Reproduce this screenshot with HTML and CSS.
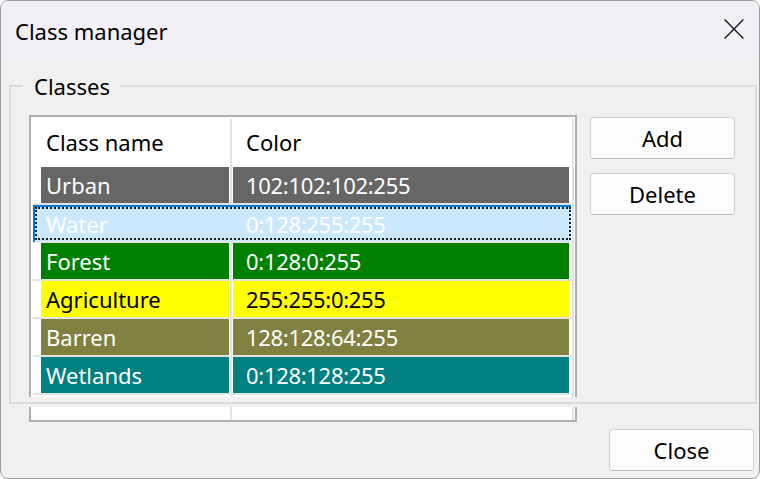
FILE: index.html
```html
<!DOCTYPE html>
<html lang="en">
<head>
<meta charset="utf-8">
<title>Class manager</title>
<link rel="stylesheet" href="styles.css">
</head>
<body>
<div class="window">
  <header class="titlebar">
    <span class="title">Class manager</span>
    <button class="close-x" aria-label="Close">
      <svg width="20" height="20" viewBox="0 0 20 20"><path d="M0.6 0.6 L19.4 19.4 M19.4 0.6 L0.6 19.4" stroke="#1a1a1a" stroke-width="1.4" fill="none"/></svg>
    </button>
  </header>
  <main class="client">
    <fieldset class="group">
      <legend>Classes</legend>
      <div class="group-body">
        <div class="list">
          <div class="list-head">
            <div class="hcell c1">Class name</div>
            <div class="hcell c2">Color</div>
          </div>
          <div class="row urban"><div class="cell c1">Urban</div><div class="cell c2">102:102:102:255</div></div>
          <div class="row water sel"><div class="cell c1">Water</div><div class="cell c2">0:128:255:255</div></div>
          <div class="row forest"><div class="cell c1">Forest</div><div class="cell c2">0:128:0:255</div></div>
          <div class="row agri"><div class="cell c1">Agriculture</div><div class="cell c2">255:255:0:255</div></div>
          <div class="row barren"><div class="cell c1">Barren</div><div class="cell c2">128:128:64:255</div></div>
          <div class="row wet"><div class="cell c1">Wetlands</div><div class="cell c2">0:128:128:255</div></div>
        </div>
        <div class="side-buttons">
          <button class="btn">Add</button>
          <button class="btn">Delete</button>
        </div>
      </div>
    </fieldset>
    <div class="footer">
      <button class="btn">Close</button>
    </div>
  </main>
</div>
</body>
</html>
```

FILE: styles.css
```css
* { box-sizing: border-box; }
html, body { margin: 0; padding: 0; }
body {
  background: #ffffff;
  font-family: "Noto Sans", "Open Sans", sans-serif;
  font-size: 22px;
  color: #000;
}
.window {
  width: 760px;
  height: 479px;
  border: 1px solid #9c9c9c;
  border-radius: 8px;
  overflow: hidden;
  background: #f0f0f0;
  display: flex;
  flex-direction: column;
}
.titlebar {
  height: 59px;
  flex: none;
  background: #f3eff7;
  display: flex;
  align-items: flex-start;
  padding-left: 14px;
}
.title {
  flex: 1;
  font-size: 22px;
  line-height: 30px;
  margin-top: 15px;
}
.close-x {
  width: 20px;
  height: 20px;
  margin: 18px 15px 0 0;
  padding: 0;
  border: 0;
  background: none;
  display: block;
}
.close-x svg { display: block; }
.client {
  flex: 1;
  display: flex;
  flex-direction: column;
}
.group {
  position: relative;
  margin: 12px 0 0 8px;
  width: 748px;
  min-width: 0;
  border: 2px solid #dcdcdc;
  padding: 15px 20px 0 18px;
}
.group legend {
  font-size: 22px;
  line-height: 28px;
  padding: 0 10px 0 11px;
  margin-left: -6px;
}
.group::after {
  content: "";
  position: absolute;
  left: 0;
  right: 0;
  bottom: -5px;
  height: 10px;
  background: linear-gradient(#f0f0f0 5px, #dcdcdc 5px, #dcdcdc 7px, #f0f0f0 7px);
  z-index: 1;
}
.group-body {
  display: flex;
  align-items: flex-start;
  gap: 13px;
  height: 287px;
}
.list {
  flex: none;
  width: 548px;
  height: 307px;
  border: 2px solid #aeaeb3;
  background:
    linear-gradient(to right, transparent 199px, #e3e3e3 199px, #e3e3e3 201px, transparent 201px, transparent 541px, #e3e3e3 541px, #e3e3e3 543px, transparent 543px) 0 2px / 100% 100% no-repeat,
    #ffffff;
}
.list-head {
  display: flex;
  height: 50px;
  padding-top: 0;
  align-items: center;
  line-height: 30px;
}
.hcell { white-space: nowrap; }
.hcell.c1 { width: 200px; padding-left: 15px; }
.hcell.c2 { padding-left: 15px; }
.row {
  display: flex;
  height: 38px;
  width: 539px;
  margin-left: 2px;
  padding-left: 8px;
  border-bottom: 2px solid #e3e3e3;
  color: #ffffff;
}
.cell {
  height: 36px;
  line-height: 36px;
  white-space: nowrap;
}
.cell.c1 { width: 188px; padding-left: 5px; }
.cell.c2 { width: 336px; margin-left: 4px; padding-left: 13px; letter-spacing: -0.3px; }
.urban .cell { background: #666666; }
.forest .cell { background: #008000; }
.agri { color: #000; }
.agri .cell { background: #ffff00; }
.barren .cell { background: #808040; }
.wet .cell { background: #008080; }
.row.sel {
  position: relative;
  width: 538px;
  padding-left: 6px;
  background: #cce8ff;
  border-top: 2px solid #0078d7;
  border-left: 2px solid #0078d7;
  color: #ffffff;
}
.row.sel .cell { height: 34px; line-height: 34px; background: transparent; }
.row.sel::after {
  content: "";
  position: absolute;
  left: 0;
  top: 0;
  right: 0;
  bottom: 1px;
  border: 2px dotted #1a1a1a;
}
.side-buttons {
  display: flex;
  flex-direction: column;
  gap: 14px;
  padding-top: 2px;
}
.btn {
  width: 145px;
  height: 42px;
  padding: 0;
  border: 1px solid #d0d0d0;
  border-bottom-color: #bcbcbc;
  border-radius: 4px;
  background: #fdfdfd;
  font-family: inherit;
  font-size: 22px;
  line-height: 30px;
  color: #000;
}
.footer {
  display: flex;
  justify-content: flex-end;
  padding: 25px 5px 0 0;
}
```
